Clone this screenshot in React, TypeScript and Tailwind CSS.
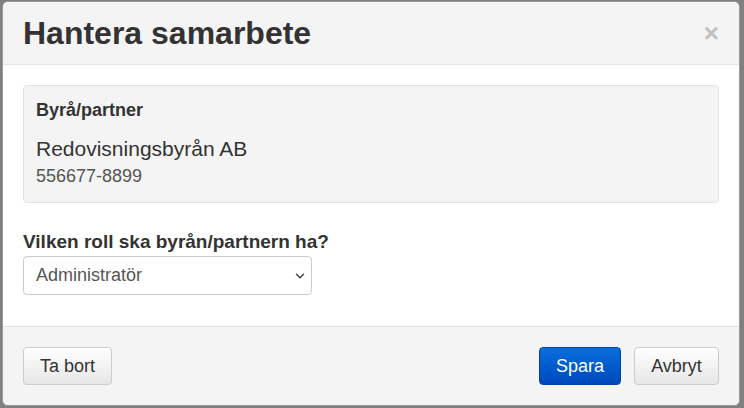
import { ChevronDown } from "lucide-react";

export default function App() {
  return (
    <div
      className="w-[744px] h-[408px] bg-[#808080] p-[1px_4px_2px_2px] text-[#333]"
      style={{ fontFamily: '"Liberation Sans", Arial, sans-serif' }}
    >
      <div className="h-full flex flex-col rounded-[6px] border border-[#999] bg-white overflow-hidden">
        <div className="h-[63px] shrink-0 flex items-center justify-between bg-[#f4f4f4] border-b border-[#e5e5e5] pl-[20px] pr-[20px]">
          <h1 className="text-[32px] font-bold leading-none">Hantera samarbete</h1>
          <span className="text-[26px] font-bold text-[#c0c0c0] leading-none">×</span>
        </div>
        <div className="flex-1 px-[20px] pt-[20px]">
          <div className="h-[118px] rounded-[4px] border border-[#e3e3e3] bg-[#f4f4f4] px-[12px] pt-[13px]">
            <div className="text-[18px] font-bold leading-[22px]">Byrå/partner</div>
            <div className="mt-[15px] text-[21px] leading-[26px]">Redovisningsbyrån AB</div>
            <div className="mt-[3px] text-[18px] text-[#555] leading-[22px]">556677-8899</div>
          </div>
          <div className="mt-[28px] text-[19px] font-bold leading-[22px]">
            Vilken roll ska byrån/partnern ha?
          </div>
          <div className="mt-[3px] w-[289px] h-[39px] rounded-[4px] border border-[#ccc] bg-white flex items-center justify-between pl-[12px] pr-[4px] text-[18px] text-[#555]">
            <span>Administratör</span>
            <ChevronDown size={14} strokeWidth={2.5} className="text-[#444]" />
          </div>
        </div>
        <div className="h-[79px] shrink-0 border-t border-[#e0e0e0] bg-[#f4f4f4] flex items-center justify-between px-[20px]">
          <button className="h-[38px] w-[89px] rounded-[4px] border border-[#ccc] bg-gradient-to-b from-white to-[#e6e6e6] text-[18px] text-[#333]">
            Ta bort
          </button>
          <div className="flex gap-[13px]">
            <button className="h-[38px] w-[82px] rounded-[4px] border border-[#0044aa] bg-gradient-to-b from-[#0a6fdc] to-[#0047bd] text-[18px] text-white">
              Spara
            </button>
            <button className="h-[38px] w-[85px] rounded-[4px] border border-[#ccc] bg-gradient-to-b from-white to-[#e6e6e6] text-[18px] text-[#333]">
              Avbryt
            </button>
          </div>
        </div>
      </div>
    </div>
  );
}
